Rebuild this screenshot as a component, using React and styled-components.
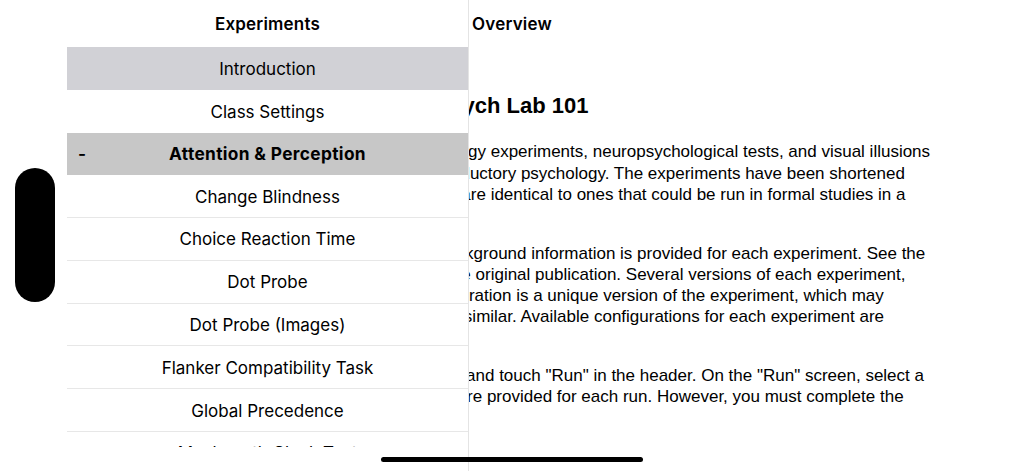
import React from "react";
import styled, { createGlobalStyle } from "styled-components";

const GlobalStyle = createGlobalStyle`
  html, body {
    margin: 0;
    padding: 0;
    background: #ffffff;
  }
  body {
    font-family: "Liberation Sans", Arial, sans-serif;
    -webkit-font-smoothing: antialiased;
  }
`;

const Screen = styled.div`
  position: relative;
  width: 1024px;
  height: 471px;
  overflow: hidden;
  background: #ffffff;
`;

const Main = styled.main`
  display: flex;
  flex-direction: column;
  height: 100%;
`;

const NavBar = styled.header`
  flex: none;
  height: 47px;
  display: flex;
  align-items: center;
  justify-content: center;
`;

const NavTitle = styled.h1`
  margin: 0;
  font-family: Inter, "Noto Sans", sans-serif;
  font-size: 17px;
  font-weight: 600;
  letter-spacing: 0.2px;
  color: #000000;
`;

const Article = styled.article`
  padding: 0 107px;
  color: #000000;
`;

const Heading = styled.h2`
  margin: 46px 0 22px;
  text-align: center;
  font-size: 22px;
  line-height: 26.4px;
  font-weight: 700;
`;

const Para = styled.p`
  margin: 0 0 16px;
  font-size: 17px;
  line-height: 21.3px;
  white-space: nowrap;
`;

const Sidebar = styled.aside`
  position: absolute;
  top: 0;
  left: 0;
  bottom: 0;
  width: 469px;
  box-sizing: border-box;
  padding-left: 67px;
  background: #ffffff;
  border-right: 1px solid #e4e4e4;
  display: flex;
  flex-direction: column;
  font-family: Inter, "Noto Sans", sans-serif;
`;

const SidebarHeader = styled.div`
  flex: none;
  height: 47px;
  display: flex;
  align-items: center;
  justify-content: center;
`;

const List = styled.ul`
  flex: none;
  margin: 0;
  padding: 0;
  list-style: none;
  height: 399.5px;
  overflow: hidden;
`;

const Row = styled.li`
  box-sizing: border-box;
  height: 42.78px;
  display: flex;
  align-items: center;
  justify-content: center;
  padding-top: 1px;
  font-size: 17px;
  color: #000000;
  background: ${(p) => (p.$selected ? "#d1d1d6" : "#ffffff")};
  border-bottom: ${(p) => (p.$divider ? "1px solid #e7e7e7" : "none")};
`;

const SectionRow = styled.li`
  height: 42.78px;
  display: grid;
  grid-template-columns: 40px 1fr 40px;
  align-items: center;
  background: #c7c7c7;
  font-size: 17.3px;
  font-weight: 700;
  letter-spacing: 0.35px;
  color: #000000;
`;

const Toggle = styled.span`
  padding-left: 11px;
  font-weight: 600;
`;

const SectionTitle = styled.span`
  text-align: center;
`;

const Handle = styled.div`
  position: absolute;
  left: 15px;
  top: 168px;
  width: 40px;
  height: 134px;
  border-radius: 20px;
  background: #000000;
`;

const HomeIndicator = styled.div`
  position: absolute;
  left: 381px;
  top: 457px;
  width: 262px;
  height: 5px;
  border-radius: 3px;
  background: #000000;
`;

const paragraphs = [
  [
    "Psych Lab 101 contains a collection of psychology experiments, neuropsychological tests, and visual illusions",
    "designed to demonstrate core concepts in introductory psychology. The experiments have been shortened",
    "to fit within a single class period, but otherwise are identical to ones that could be run in formal studies in a",
    "research laboratory.",
  ],
  [
    "First, choose any experiment from the lists. Background information is provided for each experiment. See the",
    "References section for a complete citation to the original publication. Several versions of each experiment,",
    "called configurations, are available. One configuration is a unique version of the experiment, which may",
    "differ greatly from one another, or may be fairly similar. Available configurations for each experiment are",
    "shown on the Run screen.",
  ],
  [
    'To run an experiment, select it from the sidebar and touch "Run" in the header. On the "Run" screen, select a',
    "configuration and select a subject ID. Defaults are provided for each run. However, you must complete the",
    "experiment to view your results.",
  ],
];

const experiments = [
  "Change Blindness",
  "Choice Reaction Time",
  "Dot Probe",
  "Dot Probe (Images)",
  "Flanker Compatibility Task",
  "Global Precedence",
  "Mackworth Clock Test",
  "Mental Rotation",
];

export default function App() {
  return (
    <>
      <GlobalStyle />
      <Screen>
        <Main>
          <NavBar>
            <NavTitle>Overview</NavTitle>
          </NavBar>
          <Article>
            <Heading>Psych Lab 101</Heading>
            {paragraphs.map((lines, i) => (
              <Para key={i}>
                {lines.map((line, j) => (
                  <React.Fragment key={j}>
                    {line}
                    {j < lines.length - 1 && <br />}
                  </React.Fragment>
                ))}
              </Para>
            ))}
          </Article>
        </Main>

        <Sidebar>
          <SidebarHeader>
            <NavTitle as="h2">Experiments</NavTitle>
          </SidebarHeader>
          <List>
            <Row $selected>Introduction</Row>
            <Row>Class Settings</Row>
            <SectionRow>
              <Toggle>-</Toggle>
              <SectionTitle>Attention &amp; Perception</SectionTitle>
            </SectionRow>
            {experiments.map((name) => (
              <Row key={name} $divider>
                {name}
              </Row>
            ))}
          </List>
        </Sidebar>

        <Handle />
        <HomeIndicator />
      </Screen>
    </>
  );
}
